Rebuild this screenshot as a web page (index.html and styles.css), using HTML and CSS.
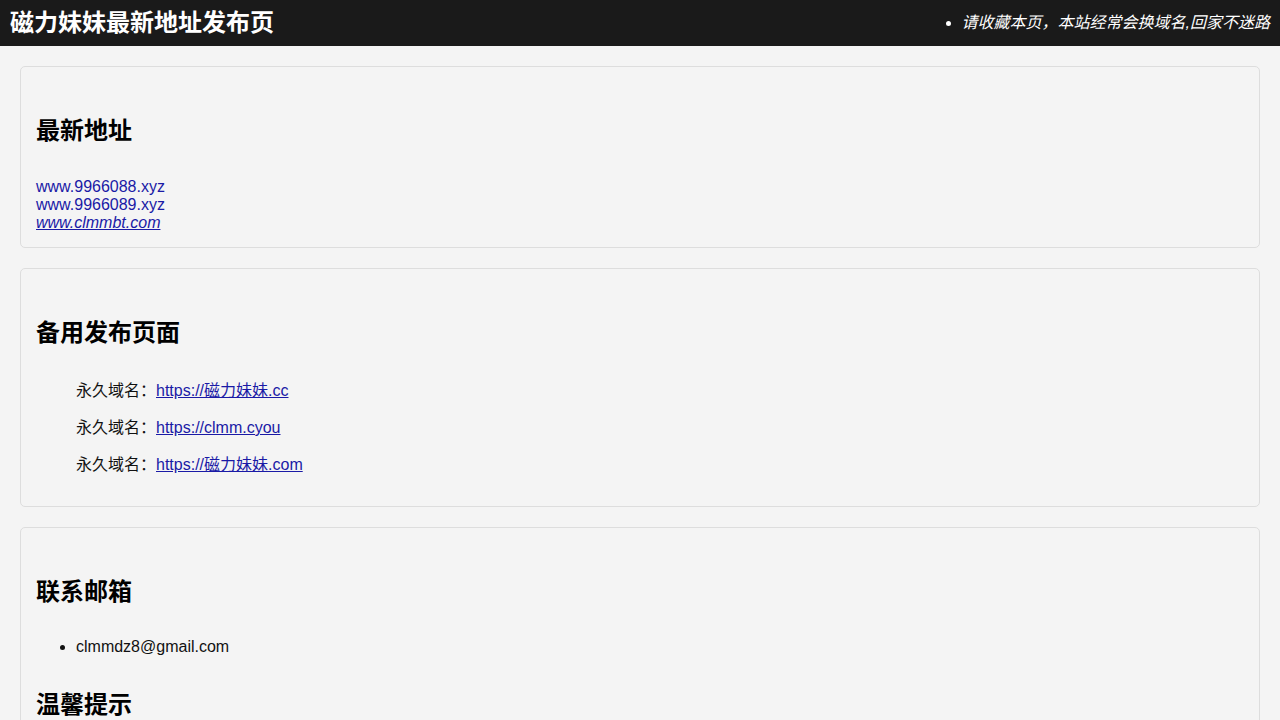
FILE: index.html
```html
<!DOCTYPE html>
<html lang="zh-CN">
<head>
  <meta charset="UTF-8" />
  <meta name="viewport" content="width=device-width, initial-scale=1.0" />
  <title>磁力妹妹最新地址发布页</title>
  <link rel="stylesheet" href="styles.css">
</head>
<body>
  <header>
    <h1>磁力妹妹最新地址发布页</h1>
    <ul class="notice">
      <li><em>请收藏本页，本站经常会换域名,回家不迷路</em></li>
    </ul>
  </header>

  <main>
    <section class="bloc">
      <h2>最新地址</h2>
      <div class="adresses">
        <a href="#">www.9966088.xyz</a><br>
        <a href="#">www.9966089.xyz</a><br>
        <a href="#" class="souligne"><em>www.clmmbt.com</em></a>
      </div>
    </section>

    <section class="bloc">
      <h2>备用发布页面</h2>
      <ul class="domaines">
        <li>永久域名：<a href="#" class="souligne">https://磁力妹妹.cc</a></li>
        <li>永久域名：<a href="#" class="souligne">https://clmm.cyou</a></li>
        <li>永久域名：<a href="#" class="souligne">https://磁力妹妹.com</a></li>
      </ul>
    </section>

    <section class="bloc">
      <h2>联系邮箱</h2>
      <ul class="contact">
        <li>clmmdz8@gmail.com</li>
      </ul>
      <h2>温馨提示</h2>
      <ul class="contact">
        <li>请记住本页地址，以便随时找到我们</li>
      </ul>
    </section>
  </main>
</body>
</html>
```

FILE: styles.css
```css
body {
  margin: 0;
  padding: 0;
  font-family: "Liberation Sans", Arial, "Noto Sans CJK SC", sans-serif;
  font-size: 16px;
  color: #111;
  background-color: #f4f4f4;
}

header {
  display: flex;
  justify-content: space-between;
  align-items: center;
  height: 46px;
  padding: 0 10px;
  background-color: #1a1a1a;
  color: #fff;
}

header h1 {
  margin: 0;
  font-size: 24px;
  line-height: 30px;
  font-weight: bold;
}

.notice {
  margin: 0;
  padding-left: 0;
  line-height: 22px;
}

main {
  padding: 20px;
  display: flex;
  flex-direction: column;
  gap: 20px;
}

.bloc {
  padding: 15px;
  border: 1px solid #ddd;
  border-radius: 5px;
  background-color: #f4f4f4;
}

h2 {
  margin: 35px 0 33px;
  font-size: 24px;
  line-height: 28px;
  font-weight: bold;
  color: #000;
}

a {
  color: #1a1aa6;
  text-decoration: none;
}

.souligne {
  text-decoration: underline;
}

.adresses {
  line-height: 18px;
}

.domaines {
  list-style: none;
  margin: 0;
  padding-left: 40px;
}

.domaines li {
  margin: 16px 0;
  line-height: 21px;
}

.contact {
  margin: 0;
  padding-left: 40px;
}

.contact li {
  margin: 16px 0 36px;
  line-height: 16px;
}
```
